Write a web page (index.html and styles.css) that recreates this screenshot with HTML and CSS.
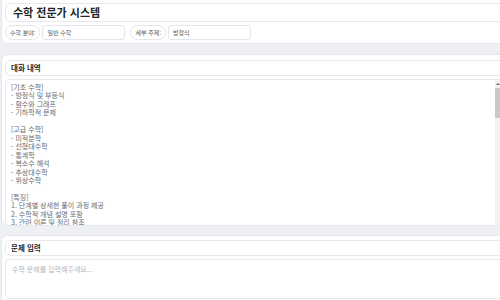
FILE: index.html
```html
<!DOCTYPE html>
<html lang="ko">
<head>
<meta charset="utf-8">
<title>수학 전문가 시스템</title>
<link rel="stylesheet" href="styles.css">
</head>
<body>
<div class="viewport">
<div class="page">
  <section class="card card-top">
    <div class="title-box"><h1 class="title">수학 전문가 시스템</h1></div>
    <div class="field-row">
      <span class="pill">수학 분야:</span>
      <div class="input">일반 수학</div>
      <span class="pill">세부 주제:</span>
      <div class="input">방정식</div>
    </div>
  </section>

  <section class="card card-history">
    <div class="head-box"><h2 class="head">대화 내역</h2></div>
    <div class="area-wrap">
      <textarea class="area area-history" readonly>[기초 수학]
- 방정식 및 부등식
- 함수와 그래프
- 기하학적 문제

[고급 수학]
- 미적분학
- 선형대수학
- 통계학
- 복소수 해석
- 추상대수학
- 위상수학

[특징]
1. 단계별 상세한 풀이 과정 제공
2. 수학적 개념 설명 포함
3. 관련 이론 및 정리 참조</textarea>
      <div class="scrollbar">
        <span class="scroll-up"></span>
        <span class="scroll-thumb"></span>
      </div>
    </div>
  </section>

  <section class="card card-input">
    <div class="head-box"><h2 class="head">문제 입력</h2></div>
    <textarea class="area area-input" placeholder="수학 문제를 입력해주세요..."></textarea>
  </section>
</div>
</div>
</body>
</html>
```
FILE: styles.css
```css
html, body {
  margin: 0;
  padding: 0;
  overflow: hidden;
  background: #eef0f3;
  font-family: "Noto Sans CJK KR", "Noto Sans", sans-serif;
}

.viewport {
  width: 500px;
  height: 300px;
  overflow: hidden;
}

.page {
  width: 520px;
  padding-left: 1px;
  display: flex;
  flex-direction: column;
}

.card {
  box-sizing: border-box;
  width: 520px;
  flex-shrink: 0;
  background: #ffffff;
  border: 1px solid #e4e7eb;
  border-radius: 6px;
  padding: 4px 3px;
  display: flex;
  flex-direction: column;
  gap: 3px;
}

.card > * {
  flex-shrink: 0;
}

.card-top {
  margin-top: -4px;
  padding-top: 6px;
  padding-bottom: 3px;
}

.card-history {
  margin-top: 10px;
  padding-top: 5px;
  height: 172px;
  overflow: hidden;
}

.card-input {
  margin-top: 9px;
  padding-top: 4px;
}

.title-box {
  box-sizing: border-box;
  height: 19px;
  border: 1px solid #e6e8eb;
  border-radius: 6px;
  display: flex;
  align-items: center;
  padding-left: 7px;
}

.title {
  margin: 0;
  font-size: 11px;
  font-weight: 700;
  color: #222428;
  line-height: 1;
}

.field-row {
  display: flex;
  align-items: center;
  height: 15px;
}

.pill {
  box-sizing: border-box;
  height: 15px;
  display: flex;
  align-items: center;
  padding: 0 4px;
  border: 1px solid #e3e5e8;
  border-radius: 8px;
  font-size: 6px;
  color: #555a60;
  margin-right: 2px;
}

.input {
  box-sizing: border-box;
  width: 83px;
  height: 15px;
  border: 1px solid #e3e5e8;
  border-radius: 3px;
  display: flex;
  align-items: center;
  padding-left: 4px;
  font-size: 6px;
  color: #555a60;
  margin-right: 5px;
}

.head-box {
  box-sizing: border-box;
  height: 16px;
  border: 1px solid #e6e8eb;
  border-radius: 6px;
  display: flex;
  align-items: center;
  padding-left: 5px;
}

.head {
  margin: 0;
  font-size: 7.5px;
  font-weight: 700;
  color: #25282c;
  line-height: 1;
}

.area-wrap {
  position: relative;
}

.area {
  display: block;
  box-sizing: border-box;
  width: 100%;
  border: 1px solid #e6e8eb;
  border-radius: 4px;
  resize: none;
  outline: none;
  font-family: "Noto Sans CJK KR", "Noto Sans", sans-serif;
  font-size: 7px;
  line-height: 8.45px;
  color: #676c72;
  background: #ffffff;
  margin: 0;
}

.area-history {
  height: 160px;
  padding: 3px 5px;
  overflow: hidden;
}

.area-input {
  height: 40px;
  padding: 5px 6px;
}

.area-input::placeholder {
  color: #b3b7bc;
}

.scrollbar {
  position: absolute;
  top: 1px;
  bottom: 1px;
  left: 490px;
  width: 5px;
  background: #f3f3f3;
  display: flex;
  flex-direction: column;
}

.scroll-up {
  height: 8px;
  display: flex;
  justify-content: center;
  align-items: center;
}

.scroll-up::before {
  content: "";
  width: 0;
  height: 0;
  border-left: 2px solid transparent;
  border-right: 2px solid transparent;
  border-bottom: 2px solid #6a6a6a;
}

.scroll-thumb {
  height: 30px;
  background: #c9c9c9;
}
```
